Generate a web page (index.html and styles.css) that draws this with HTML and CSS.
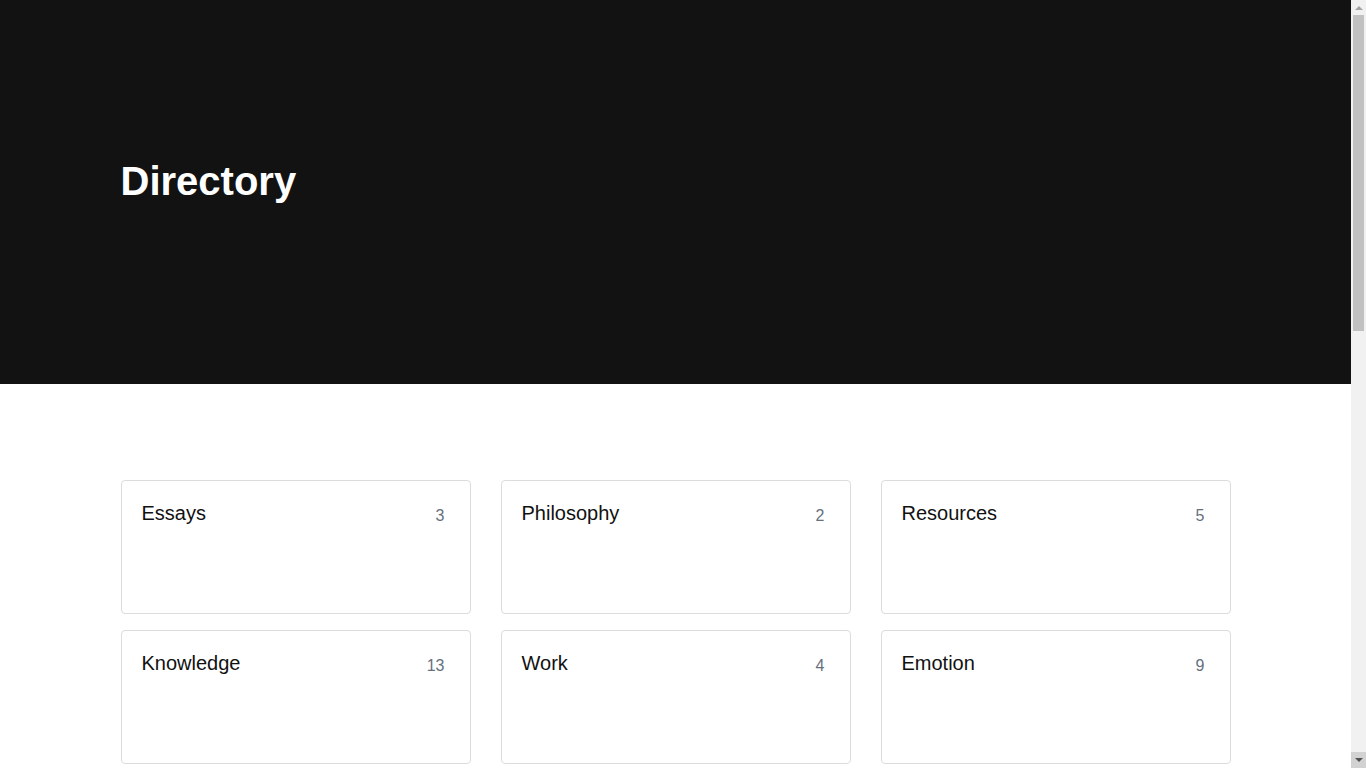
FILE: index.html
```html
<!DOCTYPE html>
<html lang="en">
<head>
<meta charset="utf-8">
<title>Directory</title>
<link rel="stylesheet" href="styles.css">
</head>
<body>
<header class="hero">
  <div class="container">
    <h1 class="hero-title">Directory</h1>
  </div>
</header>
<main class="directory">
  <div class="container">
    <div class="grid">
      <a class="card" href="#"><span class="card-title">Essays</span><span class="card-count">3</span></a>
      <a class="card" href="#"><span class="card-title">Philosophy</span><span class="card-count">2</span></a>
      <a class="card" href="#"><span class="card-title">Resources</span><span class="card-count">5</span></a>
      <a class="card" href="#"><span class="card-title">Knowledge</span><span class="card-count">13</span></a>
      <a class="card" href="#"><span class="card-title">Work</span><span class="card-count">4</span></a>
      <a class="card" href="#"><span class="card-title">Emotion</span><span class="card-count">9</span></a>
    </div>
  </div>
</main>
<div class="scrollbar" aria-hidden="true">
  <div class="sb-btn sb-up"><span class="tri tri-up"></span></div>
  <div class="sb-track"><div class="sb-thumb"></div></div>
  <div class="sb-btn sb-down"><span class="tri tri-down"></span></div>
</div>
</body>
</html>
```

FILE: styles.css
```css
* { box-sizing: border-box; }
html, body { margin: 0; padding: 0; }
html { scrollbar-width: none; }
body {
  font-family: "Liberation Sans", Arial, sans-serif;
  color: #111;
  background: #fff;
  margin-right: 15px;
}
.container {
  max-width: 1110px;
  margin: 0 auto;
}
.hero {
  background: #121212;
  height: 384px;
  padding-top: 157px;
}
.hero-title {
  margin: 0;
  color: #fff;
  font-size: 40px;
  line-height: 48px;
  font-weight: 700;
}
.directory {
  padding: 96px 0 96px;
  min-height: 1406px;
}
.grid {
  display: grid;
  grid-template-columns: repeat(3, 1fr);
  column-gap: 30px;
  row-gap: 16px;
}
.card {
  display: flex;
  justify-content: space-between;
  align-items: flex-start;
  height: 134px;
  padding: 20px;
  border: 1px solid #dcdcdc;
  border-radius: 4px;
  text-decoration: none;
  color: #111;
}
.card-title {
  font-size: 20px;
  line-height: 24px;
}
.card-count {
  font-size: 16px;
  line-height: 24px;
  margin-top: 3px;
  color: #66707d;
  margin-right: 5px;
}
.scrollbar {
  position: fixed;
  top: 0;
  right: 0;
  width: 15px;
  height: 100vh;
  background: #f1f1f1;
  display: flex;
  flex-direction: column;
}
.sb-btn {
  height: 15px;
  display: flex;
  align-items: center;
  justify-content: center;
  flex: none;
}
.sb-down { background: #d2d2d2; height: 16px; }
.sb-track { flex: 1; position: relative; }
.sb-thumb {
  position: absolute;
  top: 0;
  left: 2px;
  width: 11px;
  height: 316px;
  background: #c1c1c1;
}
.tri {
  width: 0;
  height: 0;
  border-left: 4px solid transparent;
  border-right: 4px solid transparent;
}
.tri-up { border-bottom: 4px solid #a3a3a3; }
.tri-down { border-top: 4px solid #505050; }
```
